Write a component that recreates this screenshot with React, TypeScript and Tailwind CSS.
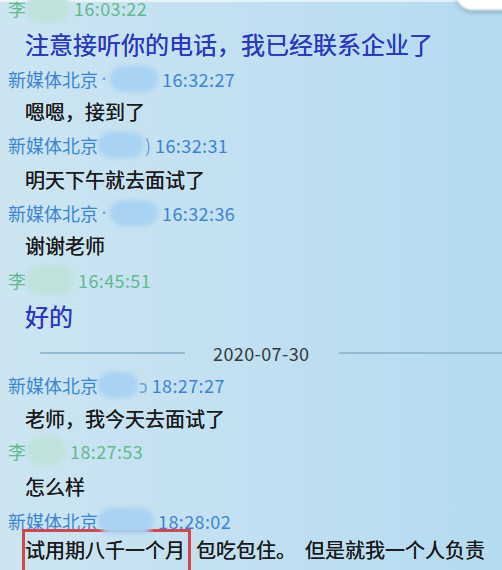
import React from "react";

const NAME = "新媒体北京";

function Blob({ w, green, className = "" }: { w: number; green?: boolean; className?: string }) {
  return (
    <span
      className={`inline-block h-[26px] rounded-full blur-[2px] align-middle ${green ? "bg-[#bfe3dc]" : "bg-[#a9d3f3]"} ${className}`}
      style={{ width: w }}
    />
  );
}

function Row({ h, children, className = "" }: { h: number; children: React.ReactNode; className?: string }) {
  return (
    <div className={`flex items-center whitespace-nowrap ${className}`} style={{ height: h }}>
      {children}
    </div>
  );
}

function NameRow({ h, pre, blob, mid, time }: { h: number; pre?: string; blob: number; mid?: string; time: string }) {
  return (
    <Row h={h} className="pl-[8px] text-[18px] leading-none text-[#3b84d4]">
      <span>{NAME}</span>
      {pre ? <span className="text-[12px] text-[#6a9fd8]">{pre}</span> : null}
      <Blob w={blob} />
      {mid ? <span className="ml-[1px] text-[#6aa0d8]">{mid}</span> : null}
      <span className="ml-[4px] tracking-[0.4px]">{time}</span>
    </Row>
  );
}

function LiRow({ h, blob, time }: { h: number; blob: number; time: string }) {
  return (
    <Row h={h} className="pl-[8px] text-[18px] leading-none text-[#5fbb8e]">
      <span>李</span>
      <Blob w={blob} green className="h-[30px]" />
      <span className="ml-[4px] tracking-[0.4px]">{time}</span>
    </Row>
  );
}

function Msg({ h, children, blue }: { h: number; children: React.ReactNode; blue?: boolean }) {
  return (
    <Row
      h={h}
      className={`pl-[25px] leading-none ${blue ? "text-[24px] text-[#2a38c0] [text-shadow:0_0_0.4px_#2a38c0]" : "text-[20px] text-[#1a1a1a] [text-shadow:0_0_0.3px_#1a1a1a]"}`}
    >
      {children}
    </Row>
  );
}

export default function App() {
  return (
    <div className="relative h-[570px] w-[502px] overflow-hidden bg-gradient-to-r from-[#cce5f1] via-[#c1e0f1] to-[#b4dbf1] font-['Noto_Sans_CJK_SC','Noto_Sans',sans-serif]">
      <div className="absolute inset-x-0 top-0 h-[2px] bg-white/60" />
      <div className="absolute right-[-24px] top-[-22px] h-[32px] w-[70px] rounded-full bg-white blur-[1px] shadow-[0_2px_4px_rgba(80,110,130,0.5)]" />

      <div className="-mt-[10px] flex flex-col">
        <LiRow h={36} blob={44} time="16:03:22" />
        <Msg h={36} blue>注意接听你的电话，我已经联系企业了</Msg>
        <NameRow h={33} pre="·" blob={48} time="16:32:27" />
        <Msg h={33}>嗯嗯，接到了</Msg>
        <NameRow h={34} blob={46} mid=")" time="16:32:31" />
        <Msg h={36}>明天下午就去面试了</Msg>
        <NameRow h={30} pre="·" blob={48} time="16:32:36" />
        <Msg h={35}>谢谢老师</Msg>
        <LiRow h={33} blob={48} time="16:45:51" />
        <Msg h={40} blue>好的</Msg>

        <Row h={33} className="pl-[40px]">
          <div className="h-[2px] w-[145px] bg-[#93bcd2]" />
          <span className="ml-[28px] text-[18px] leading-none tracking-[0.4px] text-[#333b40]">2020-07-30</span>
          <div className="ml-[30px] h-[2px] flex-1 bg-[#93bcd2]" />
        </Row>

        <NameRow h={32} blob={40} mid="ↄ" time="18:27:27" />
        <Msg h={35}>老师，我今天去面试了</Msg>
        <LiRow h={30} blob={40} time="18:27:53" />
        <Msg h={42}>怎么样</Msg>
        <NameRow h={26} blob={56} time="18:28:02" />
        <Row h={50} className="items-start pl-[22px] text-[20px] leading-none text-[#1a1a1a] [text-shadow:0_0_0.3px_#1a1a1a]">
          <span className="mt-[-5px] border-[3px] border-[#d6454c] pb-[10px] pr-[3px] pt-[8px]">试用期八千一个月</span>
          <span className="ml-[5px] mt-[6px]">包吃包住。</span>
          <span className="ml-[9px] mt-[6px]">但是就我一个人负责</span>
        </Row>
      </div>
    </div>
  );
}
